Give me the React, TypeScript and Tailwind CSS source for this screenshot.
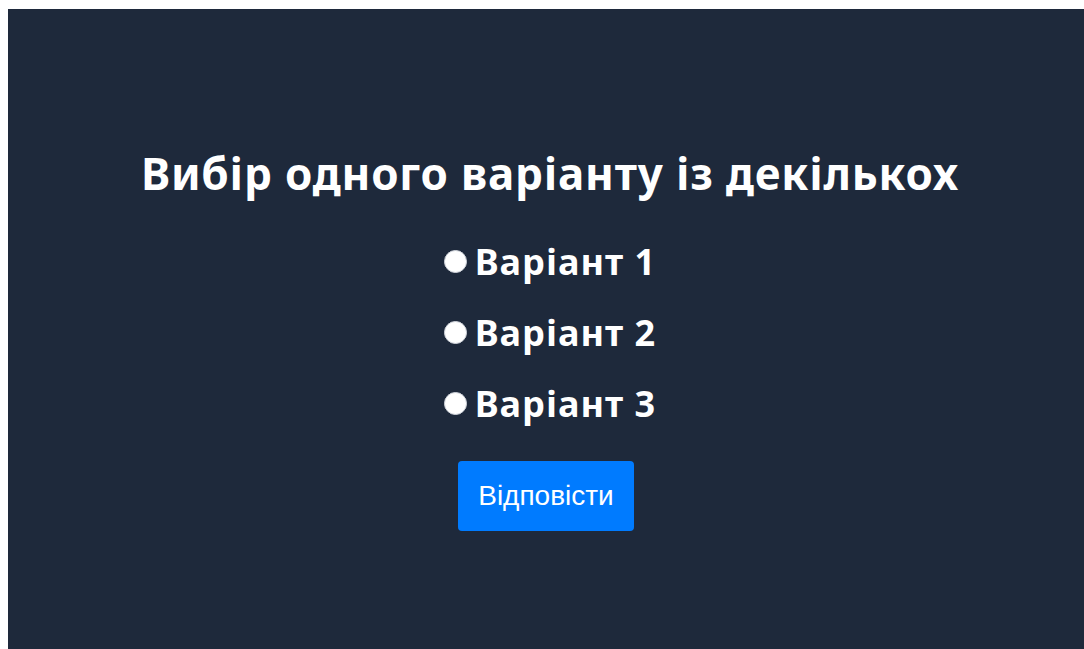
import { useState } from "react";

const options = ["Варіант 1", "Варіант 2", "Варіант 3"];

export default function App() {
  const [choice, setChoice] = useState<string | null>(null);

  return (
    <div className="min-h-screen bg-white pl-2 pt-[9px] overflow-hidden">
      <main className="h-[640px] w-[1076px] bg-[#1e293b] flex flex-col items-center pt-[140px] font-['Noto_Sans',sans-serif] text-white">
        <h1 className="text-[44px] leading-[48px] font-bold tracking-[0.8px] pl-[8px]">
          Вибір одного варіанту із декількох
        </h1>

        <form
          className="mt-[29px] flex flex-col items-center"
          onSubmit={(e) => e.preventDefault()}
        >
          {options.map((opt) => (
            <label key={opt} className="h-[71px] pl-[8px] flex items-center gap-2 cursor-pointer">
              <input
                type="radio"
                name="variant"
                value={opt}
                checked={choice === opt}
                onChange={() => setChoice(opt)}
                className="appearance-none w-[23px] h-[23px] rounded-full bg-white border border-gray-300 checked:border-[6px] checked:border-[#007bff]"
              />
              <span className="text-[36px] leading-10 font-bold tracking-[1px]">{opt}</span>
            </label>
          ))}

          <button
            type="submit"
            className="mt-[22px] w-[176px] h-[70px] rounded bg-[#007bff] text-[28px] font-['Liberation_Sans',sans-serif] text-white"
          >
            Відповісти
          </button>
        </form>
      </main>
    </div>
  );
}
